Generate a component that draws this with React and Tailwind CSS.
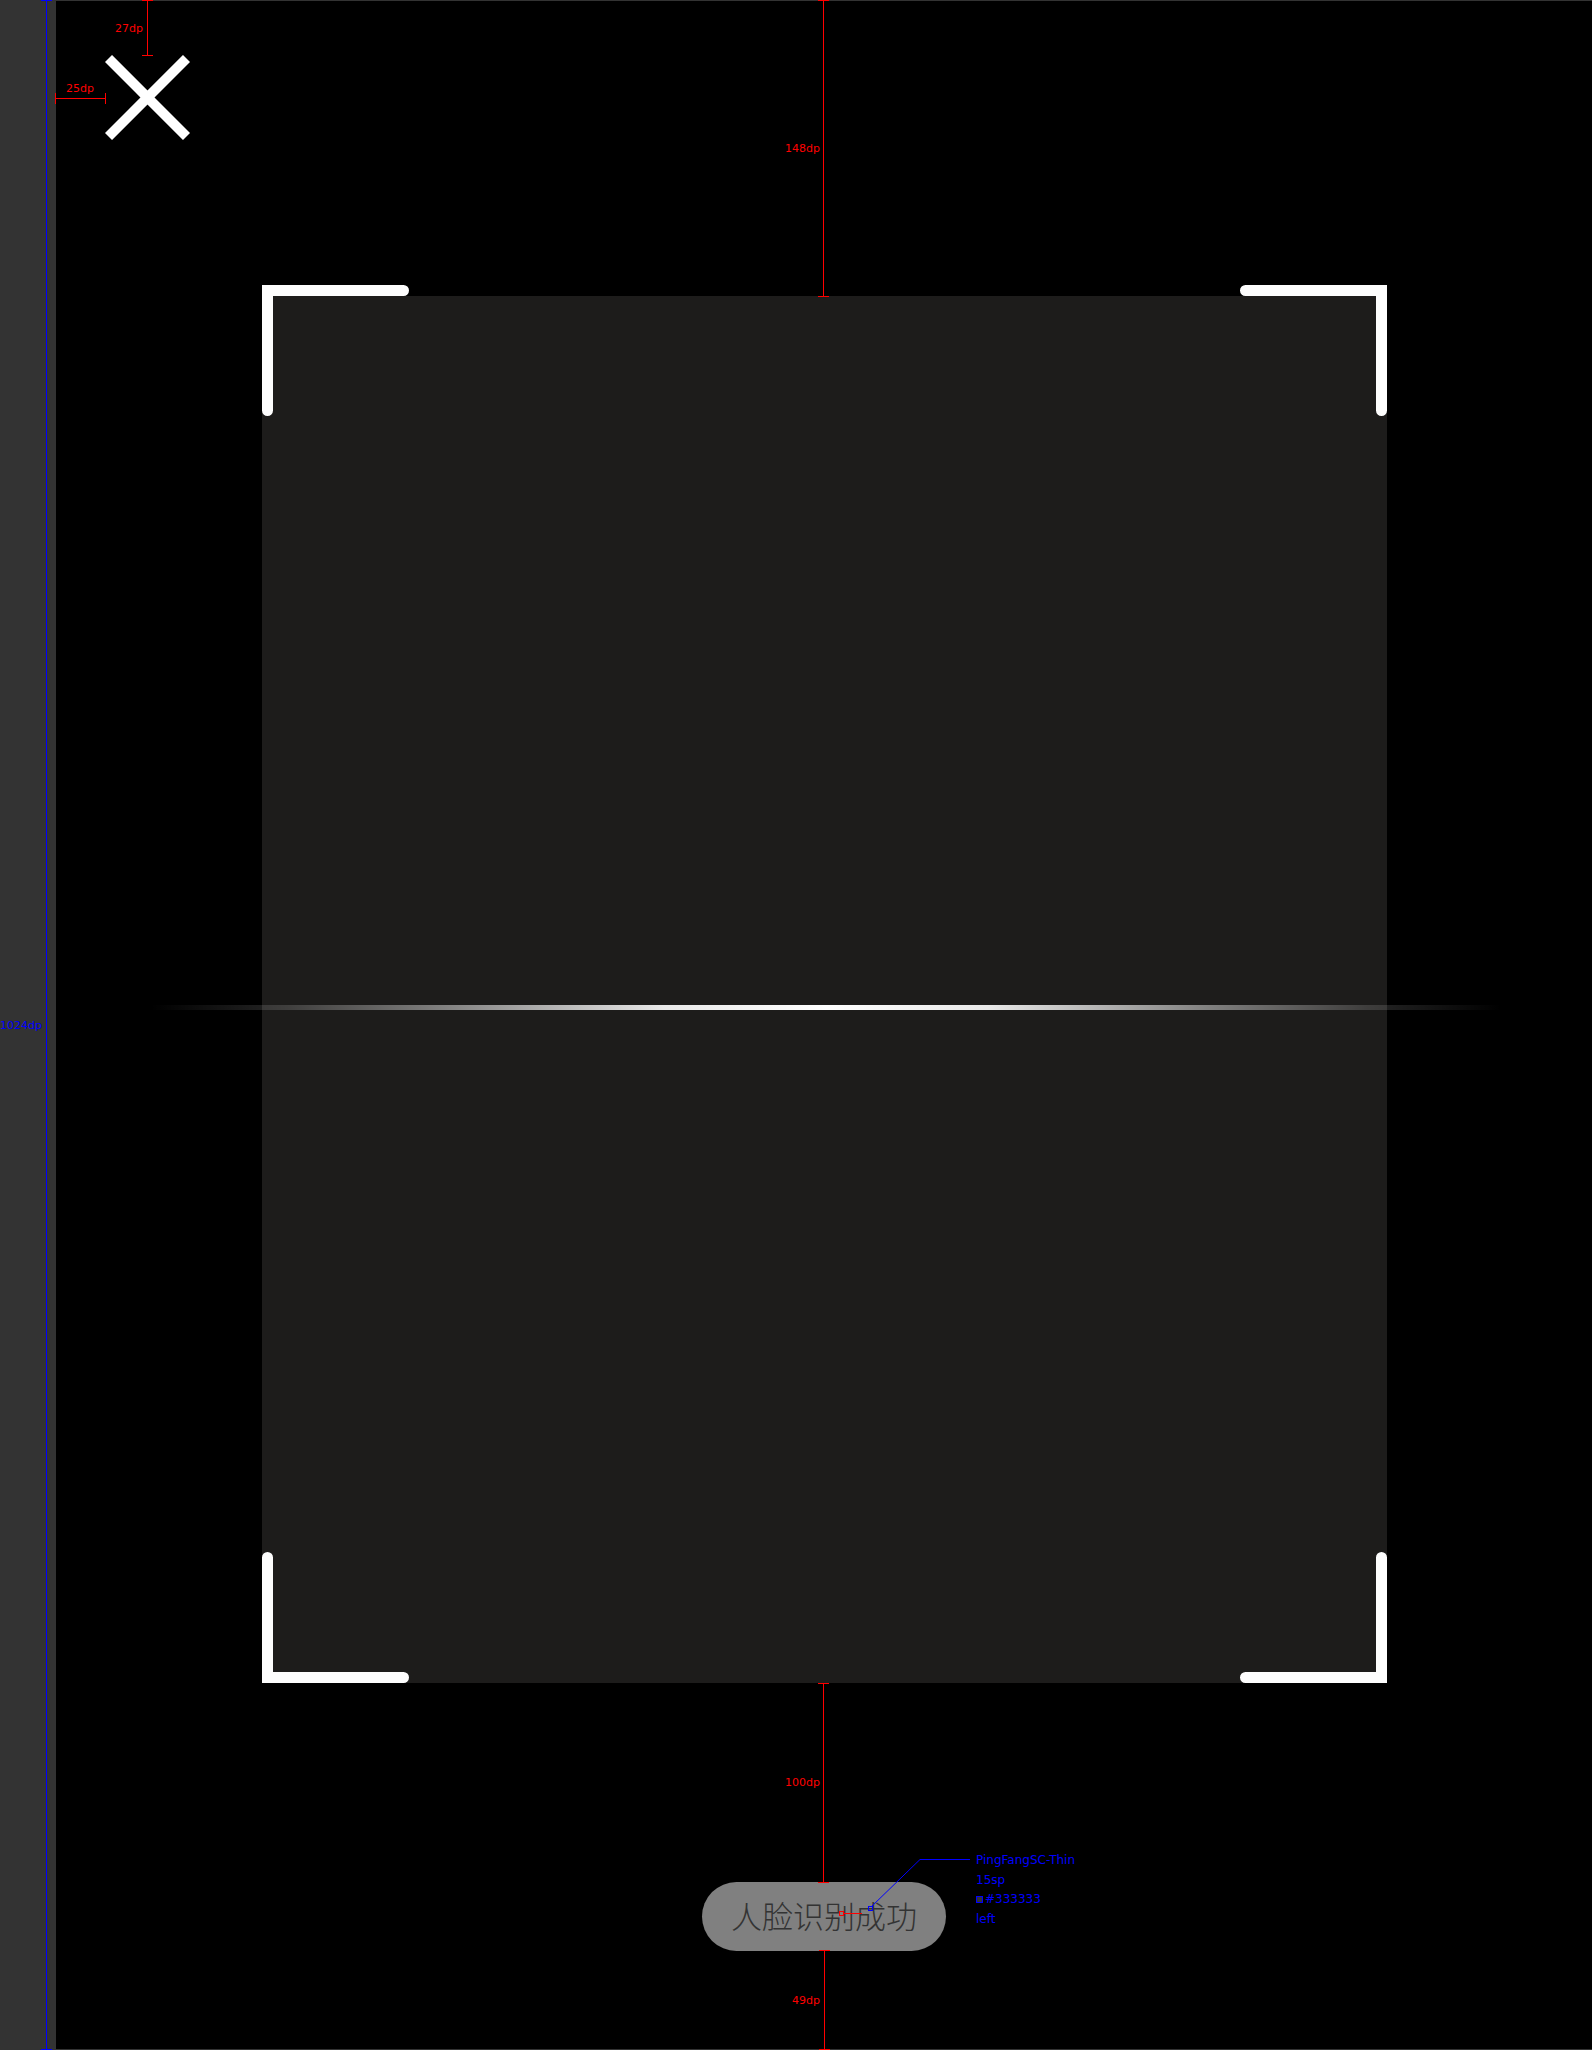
import React from 'react';

const RED = '#ff0000';
const BLUE = '#0000ff';

// corner bracket of the scan frame, drawn as one stroked path
const Corner = ({ className, d }) => (
    <svg className={`absolute ${className}`} width="148" height="131" viewBox="0 0 148 131">
        <path d={d} fill="none" stroke="#fdfdfd" strokeWidth="11" strokeLinecap="round" strokeLinejoin="miter" />
    </svg>
);

const Label = ({ className, children, color = RED }) => (
    <div
        className={`absolute text-[11px] leading-none whitespace-nowrap font-['DejaVu_Sans',sans-serif] ${className}`}
        style={{ color }}
    >
        {children}
    </div>
);

const Annotations = () => (
    <div className="absolute inset-0 pointer-events-none">
        <svg className="absolute inset-0" width="1592" height="2050" viewBox="0 0 1592 2050">
            {/* left ruler */}
            <line x1="46.5" y1="0" x2="46.5" y2="2050" stroke={BLUE} strokeWidth="1" />
            <line x1="41" y1="0.5" x2="52" y2="0.5" stroke={BLUE} strokeWidth="1" />
            <line x1="41" y1="2049.5" x2="52" y2="2049.5" stroke={BLUE} strokeWidth="1" />

            {/* 27dp */}
            <line x1="147.5" y1="0" x2="147.5" y2="55" stroke={RED} strokeWidth="1" />
            <line x1="142" y1="0.5" x2="153" y2="0.5" stroke={RED} strokeWidth="1" />
            <line x1="142" y1="55.5" x2="153" y2="55.5" stroke={RED} strokeWidth="1" />

            {/* 25dp */}
            <line x1="55" y1="98.5" x2="105" y2="98.5" stroke={RED} strokeWidth="1" />
            <line x1="55.5" y1="93" x2="55.5" y2="104" stroke={RED} strokeWidth="1" />
            <line x1="105.5" y1="93" x2="105.5" y2="104" stroke={RED} strokeWidth="1" />

            {/* 148dp */}
            <line x1="823.5" y1="0" x2="823.5" y2="296" stroke={RED} strokeWidth="1" />
            <line x1="818" y1="0.5" x2="829" y2="0.5" stroke={RED} strokeWidth="1" />
            <line x1="818" y1="296.5" x2="829" y2="296.5" stroke={RED} strokeWidth="1" />

            {/* 100dp */}
            <line x1="823.5" y1="1683" x2="823.5" y2="1882" stroke={RED} strokeWidth="1" />
            <line x1="818" y1="1683.5" x2="829" y2="1683.5" stroke={RED} strokeWidth="1" />
            <line x1="818" y1="1882.5" x2="829" y2="1882.5" stroke={RED} strokeWidth="1" />

            {/* 49dp */}
            <line x1="824.5" y1="1951" x2="824.5" y2="2050" stroke={RED} strokeWidth="1" />
            <line x1="819" y1="1950.5" x2="830" y2="1950.5" stroke={RED} strokeWidth="1" />
            <line x1="819" y1="2049.5" x2="830" y2="2049.5" stroke={RED} strokeWidth="1" />

            {/* text probe */}
            <rect x="839.5" y="1911.5" width="4" height="4" fill="none" stroke={RED} strokeWidth="1" />
            <line x1="844" y1="1913.5" x2="862" y2="1913.5" stroke={RED} strokeWidth="1" />
            <rect x="868.5" y="1906.5" width="4" height="4" fill="none" stroke={BLUE} strokeWidth="1" />
            <polyline points="871,1907 920,1859.5 970,1859.5" fill="none" stroke={BLUE} strokeWidth="1" />
        </svg>

        <Label className="left-0 top-[1020px]" color={BLUE}>1024dp</Label>
        <Label className="left-[115px] top-[23px]">27dp</Label>
        <Label className="left-[66px] top-[83px]">25dp</Label>
        <Label className="left-[785px] top-[143px]">148dp</Label>
        <Label className="left-[785px] top-[1777px]">100dp</Label>
        <Label className="left-[792px] top-[1995px]">49dp</Label>

        <div
            className="absolute left-[976px] top-[1855px] flex flex-col gap-[8.5px] text-[12px] leading-[11px] font-['DejaVu_Sans',sans-serif]"
            style={{ color: BLUE }}
        >
            <span>PingFangSC-Thin</span>
            <span>15sp</span>
            <span className="flex items-center gap-[2px]">
                <span className="inline-block w-[7px] h-[7px] bg-[#333333] border border-[#0000ff]" />
                #333333
            </span>
            <span>left</span>
        </div>
    </div>
);

export default function App() {
    return (
        <div className="relative w-[1592px] h-[2050px] flex bg-black overflow-hidden">
            {/* ruler strip */}
            <div className="w-[56px] flex-none bg-[#333333]" />

            {/* phone screen */}
            <div className="flex-1 flex flex-col border-t border-b border-[#333333]">
                <div className="pt-[54px] pl-[49px]">
                    <svg width="85" height="85" viewBox="0 0 85 85">
                        <line x1="3.5" y1="3.5" x2="81.5" y2="81.5" stroke="#ffffff" strokeWidth="10" />
                        <line x1="81.5" y1="3.5" x2="3.5" y2="81.5" stroke="#ffffff" strokeWidth="10" />
                    </svg>
                </div>

                <div className="relative mt-[156px] mx-auto w-[1125px] h-[1387px] bg-[#1d1c1b]">
                    <Corner className="left-0 -top-[11px]" d="M5.5 125.5 L5.5 5.5 L141.5 5.5" />
                    <Corner className="right-0 -top-[11px]" d="M142.5 125.5 L142.5 5.5 L6.5 5.5" />
                    <Corner className="left-0 bottom-0" d="M5.5 5.5 L5.5 125.5 L141.5 125.5" />
                    <Corner className="right-0 bottom-0" d="M142.5 5.5 L142.5 125.5 L6.5 125.5" />

                    {/* scan line */}
                    <div className="absolute -left-[111px] -right-[114px] top-[709px] h-[5px] bg-[linear-gradient(to_right,rgba(255,255,255,0)_0%,rgba(255,255,255,0.15)_10%,rgba(255,255,255,0.45)_22%,rgba(255,255,255,0.9)_38%,#ffffff_50%,rgba(255,255,255,0.9)_62%,rgba(255,255,255,0.45)_78%,rgba(255,255,255,0.15)_90%,rgba(255,255,255,0)_100%)]" />
                </div>

                <div className="mt-[199px] mx-auto w-[244px] h-[69px] rounded-full bg-[#808080] flex items-center justify-center pb-[4px]">
                    <span className="text-[31px] leading-none font-light text-[#333333] font-['Noto_Sans_CJK_SC',sans-serif]">
                        人脸识别成功
                    </span>
                </div>
            </div>

            <Annotations />
        </div>
    );
}
